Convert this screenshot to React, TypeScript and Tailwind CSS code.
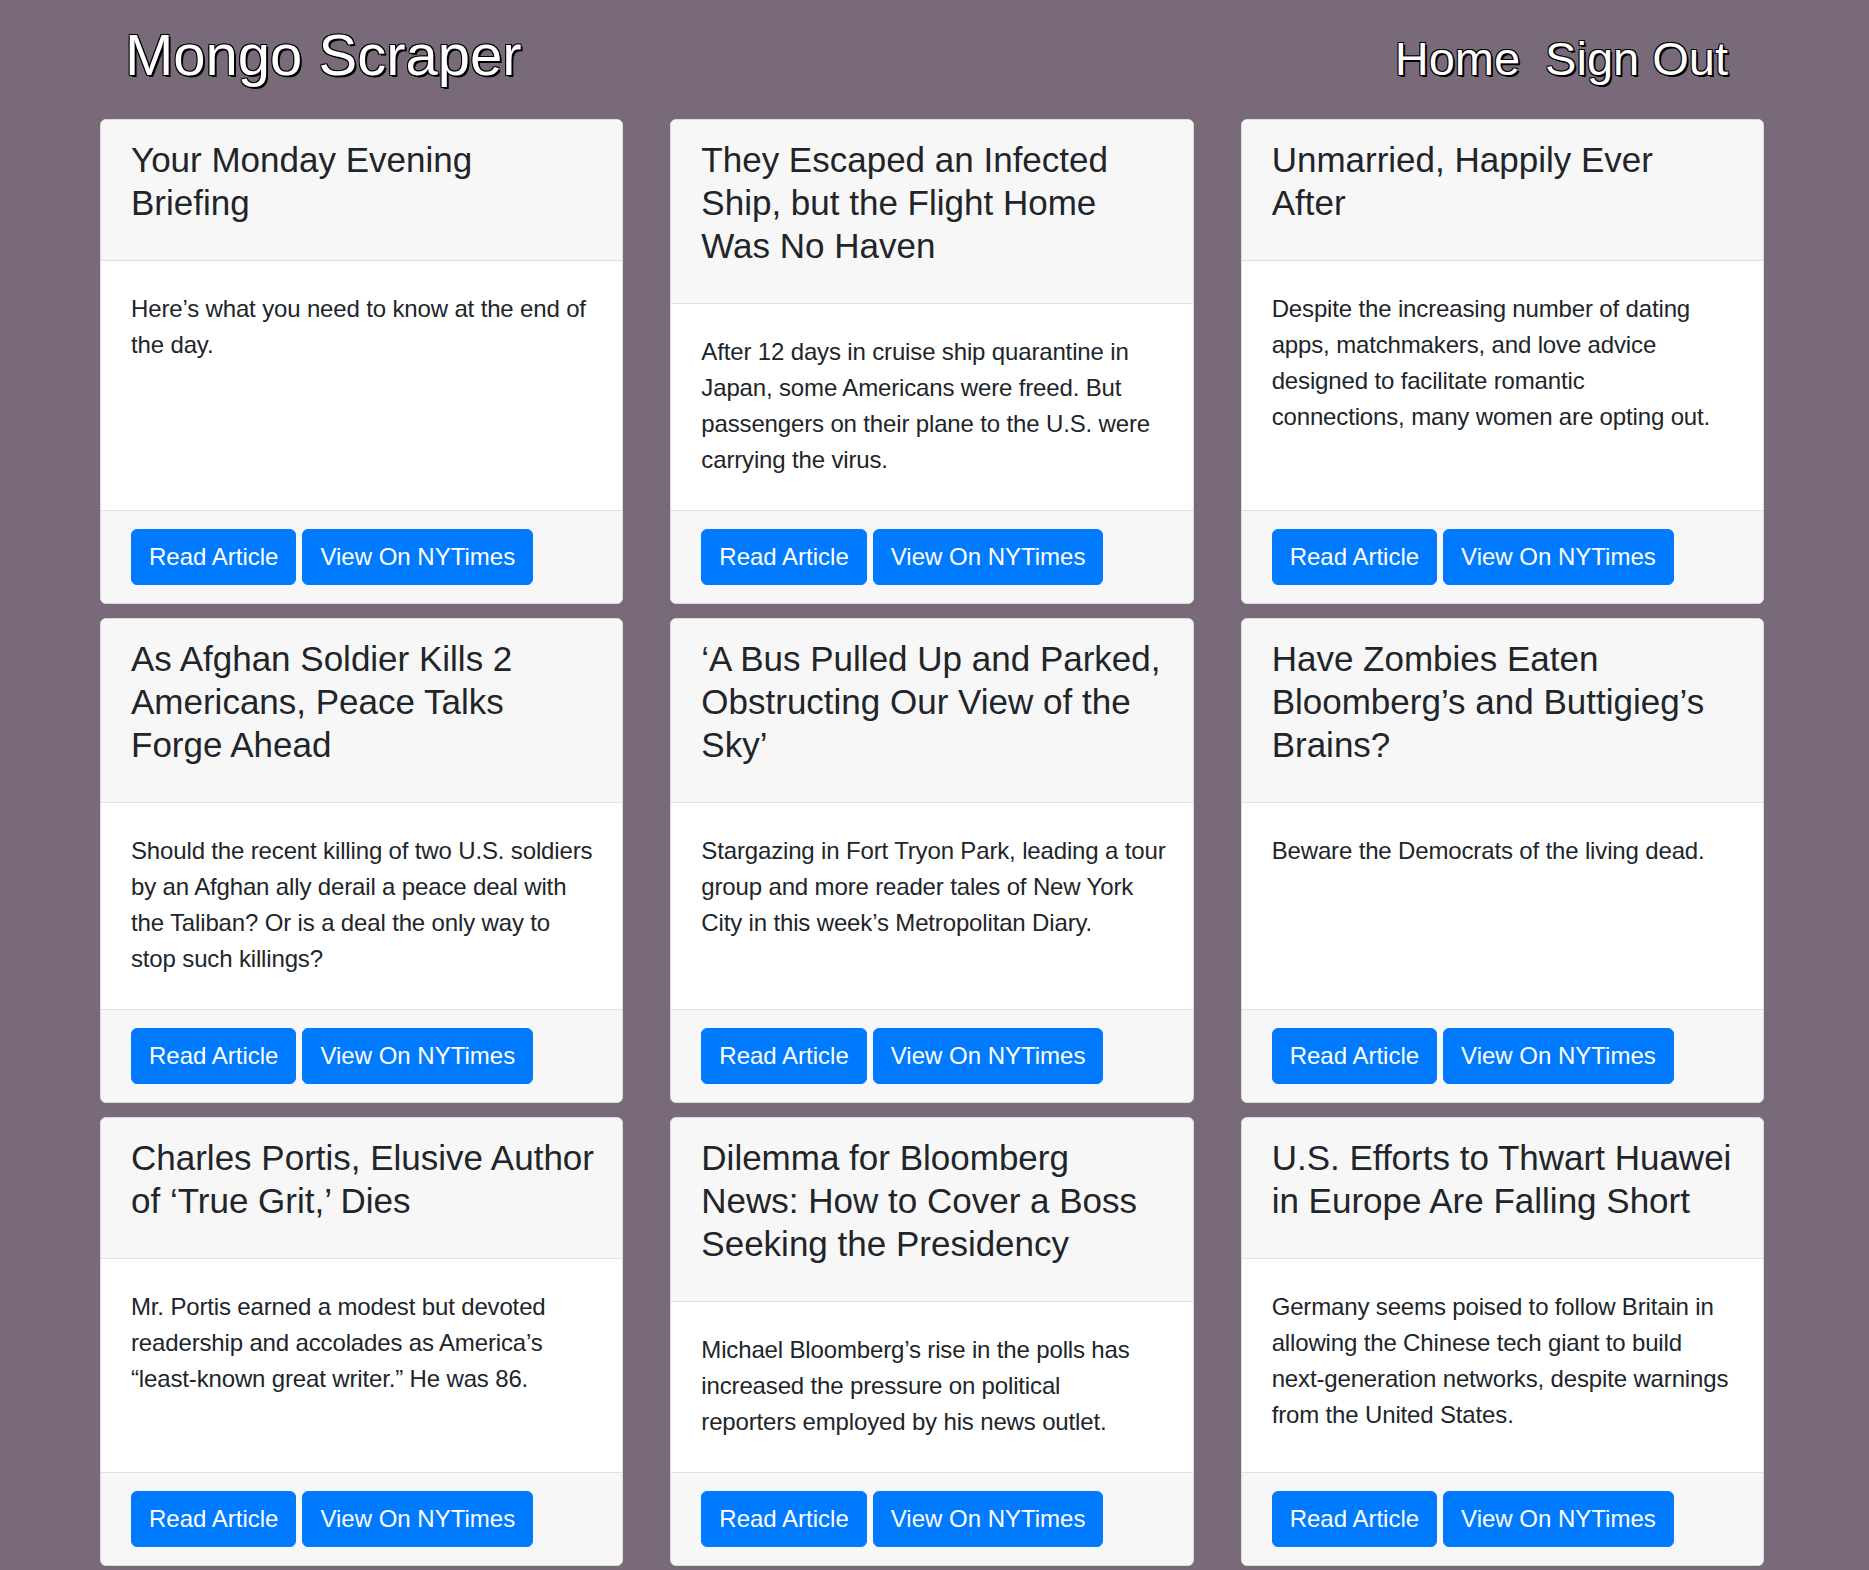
const articles = [
  {
    title: ["Your Monday Evening", "Briefing"],
    summary: ["Here’s what you need to know at the end of", "the day."],
  },
  {
    title: ["They Escaped an Infected", "Ship, but the Flight Home", "Was No Haven"],
    summary: [
      "After 12 days in cruise ship quarantine in",
      "Japan, some Americans were freed. But",
      "passengers on their plane to the U.S. were",
      "carrying the virus.",
    ],
  },
  {
    title: ["Unmarried, Happily Ever", "After"],
    summary: [
      "Despite the increasing number of dating",
      "apps, matchmakers, and love advice",
      "designed to facilitate romantic",
      "connections, many women are opting out.",
    ],
  },
  {
    title: ["As Afghan Soldier Kills 2", "Americans, Peace Talks", "Forge Ahead"],
    summary: [
      "Should the recent killing of two U.S. soldiers",
      "by an Afghan ally derail a peace deal with",
      "the Taliban? Or is a deal the only way to",
      "stop such killings?",
    ],
  },
  {
    title: ["‘A Bus Pulled Up and Parked,", "Obstructing Our View of the", "Sky’"],
    summary: [
      "Stargazing in Fort Tryon Park, leading a tour",
      "group and more reader tales of New York",
      "City in this week’s Metropolitan Diary.",
    ],
  },
  {
    title: ["Have Zombies Eaten", "Bloomberg’s and Buttigieg’s", "Brains?"],
    summary: ["Beware the Democrats of the living dead."],
  },
  {
    title: ["Charles Portis, Elusive Author", "of ‘True Grit,’ Dies"],
    summary: [
      "Mr. Portis earned a modest but devoted",
      "readership and accolades as America’s",
      "“least-known great writer.” He was 86.",
    ],
  },
  {
    title: ["Dilemma for Bloomberg", "News: How to Cover a Boss", "Seeking the Presidency"],
    summary: [
      "Michael Bloomberg’s rise in the polls has",
      "increased the pressure on political",
      "reporters employed by his news outlet.",
    ],
  },
  {
    title: ["U.S. Efforts to Thwart Huawei", "in Europe Are Falling Short"],
    summary: [
      "Germany seems poised to follow Britain in",
      "allowing the Chinese tech giant to build",
      "next-generation networks, despite warnings",
      "from the United States.",
    ],
  },
];

const outline =
  "[text-shadow:2px_2px_0_#000,-1px_-1px_0_#000,1px_-1px_0_#000,-1px_1px_0_#000]";

type Article = { title: string[]; summary: string[] };

const ArticleCard = ({ item }: { item: Article }) => {
  return (
    <div className="flex flex-col rounded-[6px] border border-[#dcd9dc] bg-white overflow-hidden">
      <div className="bg-[#f7f7f7] border-b border-[#dfdfdf] px-[30px] pt-[18px] pb-[24px]">
        <h4 className="text-[35px] leading-[43px] text-[#212529] mb-[12px]">
          {item.title.map((line, i) => (
            <span key={i} className="block whitespace-nowrap">
              {line}
            </span>
          ))}
        </h4>
      </div>
      <div className="flex-1 px-[30px] pt-[30px] pb-[32px]">
        <p className="text-[24px] leading-[36px] text-[#212529] tracking-[-0.15px]">
          {item.summary.map((line, i) => (
            <span key={i} className="block whitespace-nowrap">
              {line}
            </span>
          ))}
        </p>
      </div>
      <div className="bg-[#f7f7f7] border-t border-[#dfdfdf] px-[30px] py-[18px] flex gap-[6px]">
        <a className="rounded-[6px] border border-[#007bff] bg-[#007bff] px-[17px] py-[9px] text-[24px] leading-[36px] text-white">
          Read Article
        </a>
        <a className="rounded-[6px] border border-[#007bff] bg-[#007bff] px-[17px] py-[9px] text-[24px] leading-[36px] text-white">
          View On NYTimes
        </a>
      </div>
    </div>
  );
};

export default function App() {
  return (
    <div className="min-h-[1570px] bg-[#786a78] font-['Liberation_Sans',Arial,sans-serif] pb-[6px]">
      <header className="h-[119px] flex items-baseline justify-between pl-[125px] pr-[141px] pt-[26px]">
        <h1 className={`text-[58px] leading-none text-white ${outline}`}>Mongo Scraper</h1>
        <nav className={`flex gap-[25px] text-[47px] leading-none text-white ${outline}`}>
          <a>Home</a>
          <a>Sign Out</a>
        </nav>
      </header>
      <main className="ml-[100px] w-[1664px] grid grid-cols-3 gap-x-[47px] gap-y-[14px]">
        {articles.map((item, index) => (
          <ArticleCard key={index} item={item} />
        ))}
      </main>
    </div>
  );
}
